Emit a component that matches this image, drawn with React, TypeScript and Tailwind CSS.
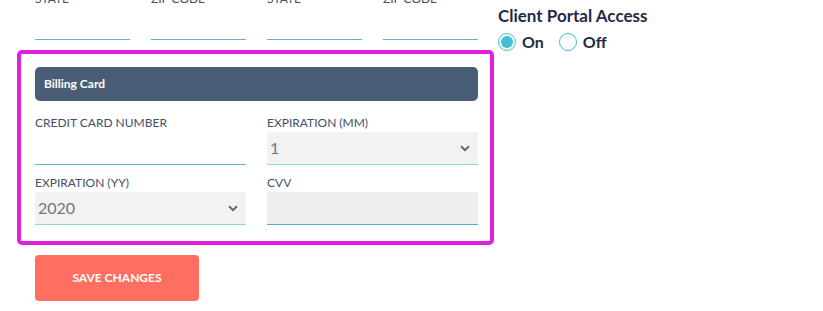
import React from "react";

const Chevron = () => (
  <svg width="10" height="7" viewBox="0 0 10 7" className="text-[#666]">
    <path d="M1 1.2 L5 5.2 L9 1.2" fill="none" stroke="currentColor" strokeWidth="2" />
  </svg>
);

function FakeSelect({ value }: { value: string }) {
  return (
    <div className="h-[33px] bg-[#f2f2f2] border-b border-[#8fd6e2] flex items-center justify-between pl-[3px] pr-[8px]">
      <span className="text-[16px] text-[#757575]">{value}</span>
      <Chevron />
    </div>
  );
}

function Label({ children }: { children: React.ReactNode }) {
  return <div className="text-[12px] leading-[14px] text-[#3f5069] uppercase">{children}</div>;
}

export default function App() {
  return (
    <div className="w-[823px] h-[311px] bg-white overflow-hidden flex" style={{ fontFamily: "Lato, 'Open Sans', sans-serif" }}>
      <div className="w-[477px] ml-[17px] flex flex-col">
        {/* address row, scrolled off the top */}
        <div className="grid grid-cols-4 gap-x-[21px] pl-[18px] pr-[16px] -mt-[8px]">
          {["State", "Zip Code", "State", "Zip Code"].map((l, i) => (
            <div key={i}>
              <Label>{l}</Label>
              <div className="h-[34px] border-b border-[#5ab6cc]" />
            </div>
          ))}
        </div>

        <div className="mt-[10px] border-4 border-[#e01ee0] rounded-[5px] pl-[14px] pr-[12px] pt-[13px] pb-[16px]">
          <div className="h-[34px] bg-[#4a5d77] rounded-[5px] flex items-center px-[9px]">
            <span className="text-white text-[12px] font-bold">Billing Card</span>
          </div>

          <div className="grid grid-cols-2 gap-x-[21px] gap-y-[11px] mt-[15px]">
            <div>
              <Label>Credit Card Number</Label>
              <div className="mt-[2px] h-[33px] border-b border-[#5ab6cc]" />
            </div>
            <div>
              <Label>Expiration (MM)</Label>
              <div className="mt-[2px]">
                <FakeSelect value="1" />
              </div>
            </div>
            <div>
              <Label>Expiration (YY)</Label>
              <div className="mt-[2px]">
                <FakeSelect value="2020" />
              </div>
            </div>
            <div>
              <Label>CVV</Label>
              <div className="mt-[2px] h-[33px] bg-[#efefef] border-b border-[#4bb4cc]" />
            </div>
          </div>
        </div>

        <button className="mt-[10px] ml-[18px] w-[164px] h-[46px] bg-[#ff6f61] rounded-[4px] text-white text-[12px] font-bold uppercase">
          Save Changes
        </button>
      </div>

      <div className="ml-[4px] pt-[5px]">
        <div className="text-[17px] font-bold text-[#1f2a44] leading-[22px]">Client Portal Access</div>
        <div className="flex items-center mt-[3px] text-[16px] font-bold text-[#1f2a44]">
          <span className="w-[18px] h-[18px] rounded-full border-[1.5px] border-[#45bfd3] flex items-center justify-center">
            <span className="w-[12px] h-[12px] rounded-full bg-[#45bfd3]" />
          </span>
          <span className="ml-[6px]">On</span>
          <span className="ml-[15px] w-[18px] h-[18px] rounded-full border-[1.5px] border-[#45bfd3]" />
          <span className="ml-[6px]">Off</span>
        </div>
      </div>
    </div>
  );
}
